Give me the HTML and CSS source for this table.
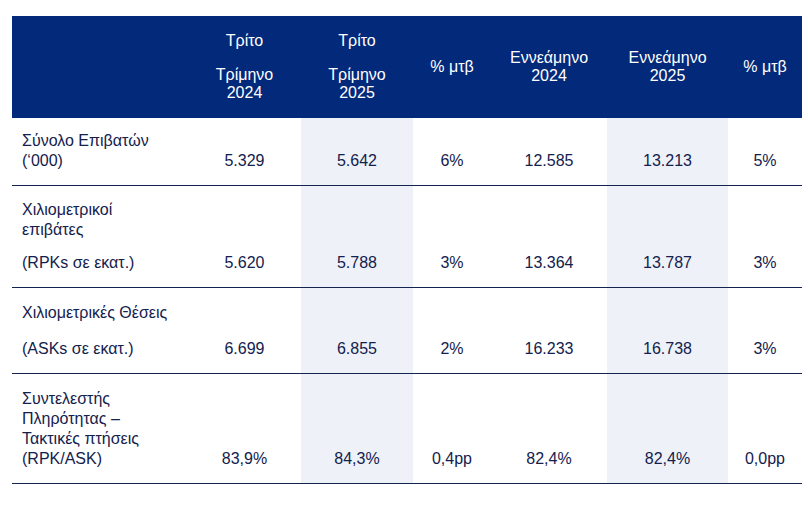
FILE: index.html
```html
<!DOCTYPE html>
<html lang="el">
<head>
<meta charset="utf-8">
<title>Επιβατική κίνηση</title>
<link rel="stylesheet" href="styles.css">
</head>
<body>
<table class="stats">
  <colgroup>
    <col class="c-label">
    <col class="c-q24">
    <col class="c-q25">
    <col class="c-p1">
    <col class="c-n24">
    <col class="c-n25">
    <col class="c-p2">
  </colgroup>
  <thead>
    <tr class="head">
      <th></th>
      <th><p class="gap">Τρίτο</p><p>Τρίμηνο<br>2024</p></th>
      <th><p class="gap">Τρίτο</p><p>Τρίμηνο<br>2025</p></th>
      <th>% μτβ</th>
      <th>Εννεάμηνο<br>2024</th>
      <th>Εννεάμηνο<br>2025</th>
      <th>% μτβ</th>
    </tr>
  </thead>
  <tbody>
    <tr class="r1">
      <td class="label">Σύνολο Επιβατών<br>(‘000)</td>
      <td>5.329</td>
      <td class="shade">5.642</td>
      <td>6%</td>
      <td>12.585</td>
      <td class="shade">13.213</td>
      <td>5%</td>
    </tr>
    <tr class="r2">
      <td class="label"><p class="gap-a">Χιλιομετρικοί<br>επιβάτες</p><p>(RPKs σε εκατ.)</p></td>
      <td>5.620</td>
      <td class="shade">5.788</td>
      <td>3%</td>
      <td>13.364</td>
      <td class="shade">13.787</td>
      <td>3%</td>
    </tr>
    <tr class="r3">
      <td class="label"><p class="gap-b">Χιλιομετρικές Θέσεις</p><p>(ASKs σε εκατ.)</p></td>
      <td>6.699</td>
      <td class="shade">6.855</td>
      <td>2%</td>
      <td>16.233</td>
      <td class="shade">16.738</td>
      <td>3%</td>
    </tr>
    <tr class="r4">
      <td class="label">Συντελεστής<br>Πληρότητας –<br>Τακτικές πτήσεις<br>(RPK/ASK)</td>
      <td>83,9%</td>
      <td class="shade">84,3%</td>
      <td>0,4pp</td>
      <td>82,4%</td>
      <td class="shade">82,4%</td>
      <td>0,0pp</td>
    </tr>
  </tbody>
</table>
</body>
</html>
```
FILE: styles.css
```css
html, body {
  margin: 0;
  padding: 0;
  background: #ffffff;
}

body {
  font-family: "Liberation Sans", Arial, sans-serif;
  font-size: 16px;
  color: #13214d;
}

.stats {
  margin: 16px 0 0 12px;
  width: 790px;
  table-layout: fixed;
  border-collapse: collapse;
  border-spacing: 0;
}

.c-label { width: 176px; }
.c-q24 { width: 113px; }
.c-q25 { width: 112px; }
.c-p1 { width: 78px; }
.c-n24 { width: 116px; }
.c-n25 { width: 121px; }
.c-p2 { width: 74px; }

.stats p {
  margin: 0;
}

.head th {
  background: #02297a;
  color: #ffffff;
  font-weight: normal;
  text-align: center;
  vertical-align: middle;
  line-height: 18px;
  height: 102px;
  padding: 0;
}

.head th .gap {
  margin-bottom: 16px;
}

.stats td {
  text-align: center;
  vertical-align: bottom;
  line-height: 20px;
  padding: 0 0 14px 0;
  border-bottom: 1px solid #14244f;
}

.stats td.label {
  text-align: left;
  padding-left: 10px;
}

.stats td.shade {
  background: #eef1f8;
}

.label .gap-a {
  margin-bottom: 13px;
}

.label .gap-b {
  margin-bottom: 16px;
}

.r1 td { height: 53px; }
.r2 td { height: 87px; }
.r3 td { height: 71px; }
.r4 td { height: 95px; }
```
